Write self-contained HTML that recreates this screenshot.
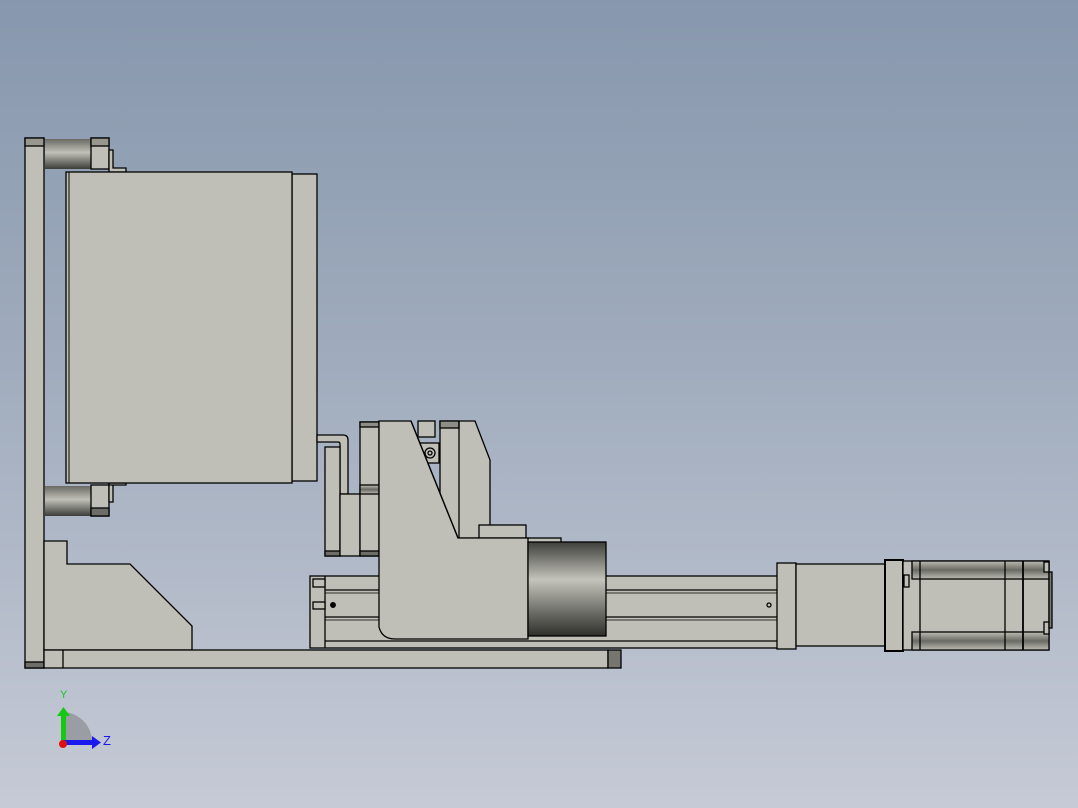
<!DOCTYPE html>
<html><head><meta charset="utf-8"><style>
html,body{margin:0;padding:0;width:1078px;height:808px;overflow:hidden}
body{background:linear-gradient(#8797ad 0%,#a0acbd 45%,#c6cad6 100%)}
svg{position:absolute;left:0;top:0}
</style></head><body>
<svg width="1078" height="808" viewBox="0 0 1078 808" xmlns="http://www.w3.org/2000/svg">
<defs>
<linearGradient id="cyl" x1="0" y1="0" x2="0" y2="1">
<stop offset="0" stop-color="#6a6a64"/><stop offset="0.45" stop-color="#c0c0b8"/><stop offset="1" stop-color="#3c3c38"/>
</linearGradient>
<linearGradient id="cylb" x1="0" y1="0" x2="0" y2="1">
<stop offset="0" stop-color="#3f3f3b"/><stop offset="0.4" stop-color="#c4c4bc"/><stop offset="1" stop-color="#2e2e2a"/>
</linearGradient>
<linearGradient id="str" x1="0" y1="0" x2="0" y2="1">
<stop offset="0" stop-color="#bdbdb5"/><stop offset="0.5" stop-color="#6a6a64"/><stop offset="1" stop-color="#bdbdb5"/>
</linearGradient>
</defs>
<g stroke="#000" stroke-width="1.3" fill="#bfbfb7">
<!-- left post -->
<rect x="25" y="138" width="19" height="530"/>
<rect x="25" y="138" width="19" height="8" fill="#979790"/>
<rect x="25" y="662" width="19" height="6" fill="#6e6e68"/>
<!-- top cylinder & block -->
<rect x="45" y="139" width="46" height="30" fill="url(#cyl)" stroke="none"/>
<rect x="91" y="138" width="18" height="31"/>
<rect x="91" y="138" width="18" height="8" fill="#979790"/>
<path d="M109 150h4v18h13v4h-17z"/>
<!-- lower cylinder & block -->
<rect x="45" y="486" width="46" height="30" fill="url(#cyl)" stroke="none"/>
<rect x="91" y="485" width="18" height="31"/>
<rect x="91" y="508" width="18" height="8" fill="#6e6e68"/>
<path d="M109 484h4v18h-4z"/>
<path d="M109 483h17v2h-17z"/>
<!-- main box -->
<rect x="292" y="174" width="25" height="307"/>
<rect x="66" y="172" width="226" height="311"/>
<line x1="69" y1="172" x2="69" y2="483" stroke-width="1"/>
<!-- base gusset -->
<path d="M44 541h23v23h63l62 62v24h-148z"/>
<!-- base plate -->
<rect x="44" y="650" width="564" height="18"/>
<line x1="63" y1="650" x2="63" y2="668"/>
<rect x="608" y="650" width="13" height="18" fill="#76766f"/>
<!-- pipe -->
<path d="M317 435h26q5 0 5 5v54h-8v-50q0-2 -2-2h-21z"/>
<!-- brackets -->
<rect x="325" y="447" width="15" height="109"/>
<rect x="325" y="551" width="15" height="5" fill="#6e6e68"/>
<rect x="340" y="494" width="20" height="62"/>
<rect x="360" y="422" width="19" height="134"/>
<rect x="360" y="422" width="19" height="5" fill="#8e8e88"/>
<rect x="360" y="485" width="19" height="9" fill="url(#str)"/>
<rect x="360" y="551" width="19" height="5" fill="#6e6e68"/>
<!-- rail -->
<rect x="310" y="576" width="470" height="72"/>
<line x1="325" y1="576" x2="325" y2="648"/>
<line x1="325" y1="590" x2="780" y2="590"/>
<line x1="325" y1="593" x2="780" y2="593" stroke-width="0.8"/>
<line x1="325" y1="617" x2="780" y2="617"/>
<line x1="325" y1="620" x2="780" y2="620" stroke-width="0.8"/>
<line x1="325" y1="641" x2="780" y2="641"/>
<rect x="313" y="579" width="12" height="8"/>
<rect x="313" y="602" width="12" height="7"/>
<circle cx="333" cy="605" r="2.3" fill="#000"/>
<circle cx="769" cy="605" r="2" fill="none"/>
<!-- right vertical piece -->
<path d="M440 421h35l15 39v78h-50z"/>
<rect x="440" y="421" width="19" height="7" fill="#8e8e88"/>
<line x1="459" y1="421" x2="459" y2="538"/>
<!-- bearing block -->
<rect x="418" y="421" width="17" height="16"/>
<rect x="420" y="443" width="19" height="20"/>
<circle cx="430" cy="453" r="5" fill="none"/>
<circle cx="430" cy="453" r="2" fill="none"/>
<!-- small top block -->
<rect x="479" y="525" width="47" height="13"/>
<rect x="526" y="538" width="35" height="6"/>
<!-- carriage -->
<path d="M379 421h32l47 117h70v101h-133q-13 0-16-12z"/>
<path d="M411 421l47 117" fill="none"/>
<!-- motor cylinder -->
<rect x="528" y="542" width="78" height="94" fill="url(#cylb)"/>
<!-- gearbox & motor -->
<rect x="777" y="563" width="19" height="86"/>
<rect x="796" y="564" width="89" height="82"/>
<rect x="885" y="560" width="18" height="91" stroke-width="2"/>
<rect x="903" y="561" width="146" height="89"/>
<rect x="912" y="561" width="137" height="18" fill="url(#str)"/>
<rect x="912" y="632" width="137" height="18" fill="url(#str)"/>
<line x1="920" y1="561" x2="920" y2="650"/>
<line x1="1005" y1="561" x2="1005" y2="650"/>
<line x1="1023" y1="561" x2="1023" y2="650" stroke-width="1.8"/>
<rect x="904" y="575" width="5" height="12"/>
<rect x="1044" y="562" width="5" height="10"/>
<rect x="1044" y="622" width="5" height="12"/>
<rect x="1049" y="572" width="3" height="56" fill="#7a7a74"/>
</g>
<!-- axis triad -->
<path d="M64 712a30 30 0 0 1 28 30h-28z" fill="#9a9da3"/>
<rect x="61" y="713" width="5" height="30" fill="#14c814"/>
<path d="M57 716l6.5-9 6.5 9z" fill="#14c814"/>
<rect x="63" y="740" width="30" height="5" fill="#1a1aee"/>
<path d="M92 736l9 6.5-9 6.5z" fill="#1a1aee"/>
<circle cx="63" cy="744" r="4" fill="#e01010"/>
<text x="60" y="698" font-family="Liberation Sans, sans-serif" font-size="11" fill="#14c814">Y</text>
<text x="103" y="745" font-family="Liberation Sans, sans-serif" font-size="13" fill="#1a1aee">Z</text>
</svg>
</body></html>
